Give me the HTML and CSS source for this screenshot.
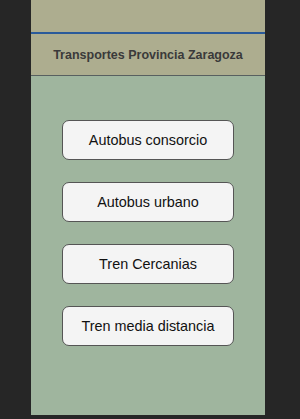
FILE: index.html
```html
<!DOCTYPE html>
<html lang="es">
<head>
    <meta charset="UTF-8">
    <meta name="viewport" content="width=device-width, initial-scale=1.0">
    <title>Transportes Provincia Zaragoza</title>
    <link rel="stylesheet" href="styles.css">
</head>
<body>

<div class="screen">
    <div class="status-area"></div>
    <div class="title-bar">
        <h1>Transportes Provincia Zaragoza</h1>
    </div>
    <div class="content">
        <button class="menu-btn">Autobus consorcio</button>
        <button class="menu-btn">Autobus urbano</button>
        <button class="menu-btn">Tren Cercanias</button>
        <button class="menu-btn">Tren media distancia</button>
    </div>
</div>

</body>
</html>
```
FILE: styles.css
```css
/* Page frame */
body {
    margin: 0;
    padding: 0;
    background-color: #262626;
    font-family: "Liberation Sans", Arial, sans-serif;
    height: 419px;
    overflow: hidden;
}

.screen {
    width: 234px;
    margin-left: 31px;
    height: 415px;
    display: flex;
    flex-direction: column;
    background-color: #9fb59e;
}

.status-area {
    height: 32px;
    background-color: #adad8f;
    border-bottom: 2px solid #2a5a9a;
}

.title-bar {
    height: 41px;
    background-color: #adad8f;
    border-bottom: 1px solid #586060;
    display: flex;
    align-items: center;
    justify-content: center;
}

.title-bar h1 {
    margin: 0;
    font-size: 12.5px;
    font-weight: bold;
    color: #3a3a3a;
}

.content {
    flex-grow: 1;
    display: flex;
    flex-direction: column;
    align-items: center;
    padding-top: 44px;
    gap: 22px;
}

.menu-btn {
    width: 172px;
    height: 40px;
    background-color: #f4f4f4;
    border: 1px solid #555;
    border-radius: 7px;
    font-family: "Liberation Sans", Arial, sans-serif;
    font-size: 14.4px;
    color: #111;
    padding: 0;
}
```
